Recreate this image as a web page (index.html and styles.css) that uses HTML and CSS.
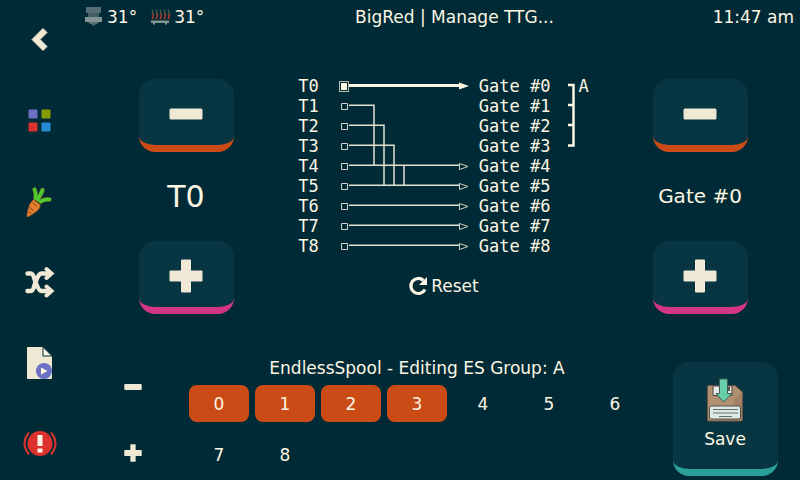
FILE: index.html
```
<!DOCTYPE html>
<html lang="en">
<head>
<meta charset="utf-8">
<meta name="viewport" content="width=device-width, initial-scale=1">
<title>BigRed | Manage TTG</title>
<link rel="stylesheet" href="styles.css">
</head>
<body>
<nav class="sidebar" aria-label="Main">
  <button class="nav-button" type="button" aria-label="Back">
    <svg width="32" height="32" viewBox="0 0 32 32"><path d="M8 16.500 19 5.500l4 4-7 7 7 7-4 4z" fill="#eee8d5" stroke="#eee8d5" stroke-linejoin="round"/></svg>
  </button>
  <button class="nav-button" type="button" aria-label="Home">
    <svg width="32" height="32" viewBox="0 0 32 32"><rect x="4.500" y="5.500" width="9" height="9" rx="1" fill="#6c71c4"/><rect x="17.500" y="5.500" width="9" height="9" rx="1" fill="#859900"/><rect x="4.500" y="18.500" width="9" height="9" rx="1" fill="#dc322f"/><rect x="17.500" y="18.500" width="9" height="9" rx="1" fill="#268bd2"/></svg>
  </button>
  <button class="nav-button" type="button" aria-label="Feeder">
    <svg width="32" height="32" viewBox="0 0 32 32"><g fill="none" stroke="#604f24" stroke-width="4.600" stroke-linecap="round"><path d="M10.500 4.500c1.500 3 1.500 6 1 10M18.500 5c-1 3.500-2.500 5.500-4.500 10M25.500 14.500c-4-.5-7 .5-9 2"/></g><path d="M9.500 14.500 16.500 20c-.5 5-5 7.500-12.500 12-1 .200-1.500-.3-1.300-1.200C4 23 5 18.500 9.500 14.500z" fill="#e67e2e" stroke="#604624" stroke-width=".7"/><g fill="none" stroke="#4fc92d" stroke-width="3.600" stroke-linecap="round"><path d="M10.500 4.500c1.500 3 1.500 6 1 8.500M18.500 5c-1 3.500-2.500 5.500-5 9.500M25.500 14.500c-4-.5-7 .5-9 2"/></g><path d="m8.500 17.500 4 4M5.500 22l4 4M4.500 26.500l2.500 2" stroke="#604624"/></svg>
  </button>
  <button class="nav-button" type="button" aria-label="Shuffle tools">
    <svg width="32" height="32" viewBox="0 0 32 32"><g fill="none" stroke="#eee8d5" stroke-linecap="round"><path d="M3.500 7.500h3.500c2.500 0 3 5 4.500 8.500S14.500 25 17.500 25H26M3.500 25h3.500c2.500 0 3-5.500 4.500-9S14.500 7.500 17.500 7.500H26" stroke-width="4.400"/><path d="m22.500 3 5 4.500-5 4.500M22.500 20.500l5 4.500-5 4.500" stroke-width="4"/></g></svg>
  </button>
  <button class="nav-button" type="button" aria-label="Print files">
    <svg width="32" height="32" viewBox="0 0 32 32"><path d="M4 0h14.500v9.500H28V31q0 1-1 1H4q-1 0-1-1V1q0-1 1-1z" fill="#eee8d5"/><path d="M19.500 1 27 8.500h-7.500z" fill="#fdf6e3"/><path d="m19 .5 8.500 8.500" stroke="#93a1a1" stroke-width=".6"/><circle cx="20" cy="24" r="8" fill="#6c71c4"/><path d="M17 20.500 23.500 24 17 27.500z" fill="#fdf6e3"/></svg>
  </button>
  <button class="nav-button" type="button" aria-label="Emergency stop">
    <svg width="34" height="32" viewBox="0 0 34 32"><circle cx="17" cy="15.500" r="12.500" fill="#dc322f"/><path d="M6 4.500Q-3 15.500 6 26.500M28 4.500q9 11 0 22" fill="none" stroke="#dc322f" stroke-width="2"/><path d="M14.500 7h5v11h-5zM14.500 20.500h5v4h-5z" fill="#fdf6e3"/></svg>
  </button>
</nav>

<div class="screen">
  <header class="titlebar">
    <div class="temps">
      <span class="temp">
        <svg width="18" height="20" viewBox="0 0 18 20"><path d="M1 0h15v6H1z" fill="#586e75"/><path d="M3 6h11v4H3z" fill="#455f67"/><path d="M0 10h17v5H0z" fill="#839496"/><path d="M3 15h11l-2 2h-1l-2.500 2L6 17H5z" fill="#586e75"/></svg>31°</span>
      <span class="temp">
        <svg width="20" height="20" viewBox="0 0 20 20"><path d="M2 2.500q2 2.500 0 5M6 2.500q2 2.500 0 5M10 2.500q2 2.500 0 5M14 2.500q2 2.500 0 5M18 2.500q2 2.500 0 5" fill="none" stroke="#465447" stroke-width="1.500"/><path d="M3 7q1 2-1 5M7 7q1 2-1 5M11 7q1 2-1 5M15 7q1 2-1 5M19 7q1 2-1 5" fill="none" stroke="#b5382f" stroke-width="1.500"/><path d="M1 13.500h18v2.500h-2v1.500h-2V16H5v1.500H3V16H1z" fill="#839496"/></svg>31°</span>
    </div>
    <h1 class="title">BigRed | Manage TTG...</h1>
    <time class="clock">11:47 am</time>
  </header>

  <main class="content">
    <section class="mapping">
      <div class="stepper" role="group" aria-label="Tool">
        <button class="tile orange" type="button" aria-label="Previous tool"><svg width="34" height="34" viewBox="0 0 34 34"><rect x="0.500" y="11.500" width="33" height="11" rx="1.500"/></svg></button>
        <output class="tool-value">T0</output>
        <button class="tile magenta" type="button" aria-label="Next tool"><svg width="34" height="34" viewBox="0 0 34 34"><path d="M13 .5h8q1 0 1 1v10h10.500q1 0 1 1v9q0 1-1 1H22v10q0 1-1 1h-8q-1 0-1-1v-10H1.500q-1 0-1-1v-9q0-1 1-1H12v-10q0-1 1-1z"/></svg></button>
      </div>
      <div class="map-column">
        <div class="map">
<pre class="tools">T0
T1
T2
T3
T4
T5
T6
T7
T8</pre>
          <svg width="130" height="180" viewBox="0 0 130 180">
            <path d="M10 9.500h112" stroke="#fdf6e3" stroke-width="3"/>
            <path d="M120 6.500 130 10l-10 3.500z" fill="#fdf6e3"/>
            <rect x="0.500" y="5.500" width="9" height="10" fill="none" stroke="#b9bcb0"/>
            <rect x="2" y="7" width="6" height="7" fill="#fdf6e3"/>
            <g fill="none" stroke="#e4e1d1" stroke-width="1.500">
              <path d="M10 29.300h25V89M10 49.300h35V109M10 69.300h45V109M65 89v20"/>
              <path d="M10 89.300h110M10 109.300h110M10 129.300h110M10 149.300h110M10 169.300h110"/>
            </g>
            <g fill="none" stroke="#d0d1c4">
              <path d="M2.500 27.500h6v6h-6zM2.500 47.500h6v6h-6zM2.500 67.500h6v6h-6zM2.500 87.500h6v6h-6zM2.500 107.500h6v6h-6zM2.500 127.500h6v6h-6zM2.500 147.500h6v6h-6zM2.500 167.500h6v6h-6z"/>
              <path d="M120.500 87.500v6l8.500-3zM120.500 107.500v6l8.500-3zM120.500 127.500v6l8.500-3zM120.500 147.500v6l8.500-3zM120.500 167.500v6l8.500-3z"/>
            </g>
          </svg>
<pre class="gate-names">Gate #0
Gate #1
Gate #2
Gate #3
Gate #4
Gate #5
Gate #6
Gate #7
Gate #8</pre>
          <svg class="bracket" width="8" height="80" viewBox="0 0 8 80"><path d="M0 9h5.500v60.500H0M0 29h5M0 49h5" fill="none" stroke="#fdf6e3" stroke-width="2.500"/></svg>
          <span class="group-name">A</span>
        </div>
        <button class="reset" type="button"><svg width="20" height="20" viewBox="0 0 20 20"><path d="M17 13.500A7.500 7.500 0 1 1 15.500 4.500" fill="none" stroke="#fdf6e3" stroke-width="3.200"/><path d="M19 1v8h-8z" fill="#fdf6e3"/></svg>Reset</button>
      </div>
      <div class="stepper" role="group" aria-label="Gate">
        <button class="tile orange" type="button" aria-label="Previous gate"><svg width="34" height="34" viewBox="0 0 34 34"><rect x="0.500" y="11.500" width="33" height="11" rx="1.500"/></svg></button>
        <output class="gate-value">Gate #0</output>
        <button class="tile magenta" type="button" aria-label="Next gate"><svg width="34" height="34" viewBox="0 0 34 34"><path d="M13 .5h8q1 0 1 1v10h10.500q1 0 1 1v9q0 1-1 1H22v10q0 1-1 1h-8q-1 0-1-1v-10H1.500q-1 0-1-1v-9q0-1 1-1H12v-10q0-1 1-1z"/></svg></button>
      </div>
    </section>

    <section class="spool">
      <div class="group-step">
        <button class="icon-button" type="button" aria-label="Previous group"><svg width="18" height="18" viewBox="0 0 34 34"><rect x="0.500" y="11.500" width="33" height="11" rx="1.500"/></svg></button>
        <button class="icon-button" type="button" aria-label="Next group"><svg width="18" height="18" viewBox="0 0 34 34"><path d="M13 .5h8q1 0 1 1v10h10.500q1 0 1 1v9q0 1-1 1H22v10q0 1-1 1h-8q-1 0-1-1v-10H1.500q-1 0-1-1v-9q0-1 1-1H12v-10q0-1 1-1z"/></svg></button>
      </div>
      <div class="group-editor">
        <h2 class="group-title">EndlessSpool - Editing ES Group: A</h2>
        <div class="gates">
          <button class="gate active" type="button" aria-pressed="true">0</button>
          <button class="gate active" type="button" aria-pressed="true">1</button>
          <button class="gate active" type="button" aria-pressed="true">2</button>
          <button class="gate active" type="button" aria-pressed="true">3</button>
          <button class="gate" type="button" aria-pressed="false">4</button>
          <button class="gate" type="button" aria-pressed="false">5</button>
          <button class="gate" type="button" aria-pressed="false">6</button>
          <button class="gate" type="button" aria-pressed="false">7</button>
          <button class="gate" type="button" aria-pressed="false">8</button>
        </div>
      </div>
      <div class="save-cell">
        <button class="tile teal" type="button">
          <svg width="38" height="44" viewBox="0 0 38 44"><path d="M3 7.500h26L36.500 14v27.500q0 1.500-1.500 1.500H3q-1.500 0-1.500-1.500V9q0-1.500 1.500-1.500z" fill="#af9072" stroke="#6a5544"/><path d="M36 15v27H19q9-8 10-22z" fill="#987a60" opacity=".6"/><path d="M7 8h19v9.500H7z" fill="#e3e8e8" stroke="#4a4540"/><path d="M20 9h4v4h-4z" fill="#59544f"/><rect x="3.500" y="28" width="31" height="13" rx="2" fill="#dce9e6" stroke="#57504a"/><path d="M7 31.500h25M7 35h25M13 38.500h13" stroke="#65706e" fill="none"/><path d="M13.500 1h8v14.500h4.500L17.500 24 10 15.500h3.500z" fill="#68cfaa" stroke="#3c5c54"/></svg>
          Save
        </button>
      </div>
    </section>
  </main>
</div>
</body>
</html>
```
FILE: styles.css
```
* {
  box-sizing: border-box;
}

body {
  margin: 0;
  min-height: 100vh;
  display: grid;
  grid-template-columns: 80px 1fr;
  background: #002b36;
  color: #fdf6e3;
  font: 17px/20px "DejaVu Sans", sans-serif;
}

button {
  font: inherit;
  color: inherit;
  background: none;
  border: 0;
  padding: 0;
  cursor: pointer;
}

svg {
  display: block;
  flex: none;
}

h1,
h2,
pre {
  margin: 0;
  font: inherit;
}

.sidebar {
  display: flex;
  flex-direction: column;
  justify-content: space-between;
  padding: 3px 0 0;
}

.nav-button {
  height: 72px;
  display: grid;
  place-items: center;
}

.screen {
  display: flex;
  flex-direction: column;
}

.titlebar {
  height: 34px;
  padding: 0 6px 0 5px;
  display: grid;
  grid-template-columns: auto 1fr auto;
  align-items: center;
}

.temps {
  display: flex;
  gap: 13px;
}

.temp {
  display: flex;
  align-items: center;
  gap: 4px;
}

.title {
  text-align: center;
}

.clock {
  padding-left: 8px;
}

.content {
  flex: 1;
  display: flex;
  flex-direction: column;
  justify-content: space-between;
  padding-top: 42px;
}

.mapping {
  display: grid;
  grid-template-columns: 53fr 77fr 50fr;
}

.stepper {
  display: flex;
  flex-direction: column;
  align-items: center;
  gap: 24px;
  padding-top: 3px;
}

.tile {
  width: 95px;
  height: 73px;
  padding-top: 4px;
  display: flex;
  flex-direction: column;
  align-items: center;
  justify-content: center;
  gap: 7px;
  background: #073642;
  border-bottom: 7px solid;
  border-radius: 16px;
  fill: #eee8d5;
}

.orange {
  border-color: #cb4b16;
}

.magenta {
  border-color: #d33682;
}

.teal {
  width: 105px;
  height: 114px;
  padding: 0 0 5px;
  border-color: #2aa198;
}

.tool-value,
.gate-value {
  font-size: 20px;
  line-height: 41px;
}

.tool-value {
  font-size: 30px;
}

.map-column {
  display: flex;
  flex-direction: column;
  align-items: center;
  gap: 20px;
  padding-right: 5px;
}

.map {
  display: flex;
  font-family: "DejaVu Sans Mono", monospace;
}

.tools {
  padding-right: 20px;
}

.gate-names {
  padding: 0 18px 0 10px;
}

.group-name {
  padding-left: 2px;
}

.reset {
  display: flex;
  align-items: center;
  gap: 3px;
}

.spool {
  display: grid;
  grid-template-columns: 53fr 231fr 76fr;
  align-items: start;
}

.group-step {
  display: grid;
  justify-items: center;
  gap: 30px;
  padding-top: 11px;
}

.icon-button {
  width: 36px;
  height: 36px;
  display: grid;
  place-items: center;
  fill: #eee8d5;
}

.group-title {
  text-align: center;
}

.gates {
  display: grid;
  grid-template-columns: repeat(7, 1fr);
  row-gap: 14px;
  padding: 7px 0;
}

.gate {
  height: 37px;
  margin: 0 3px;
  border-radius: 8px;
}

.active {
  background: #cb4b16;
}

.save-cell {
  display: grid;
  place-items: center;
  padding: 4px 0 4px 2px;
}
```
